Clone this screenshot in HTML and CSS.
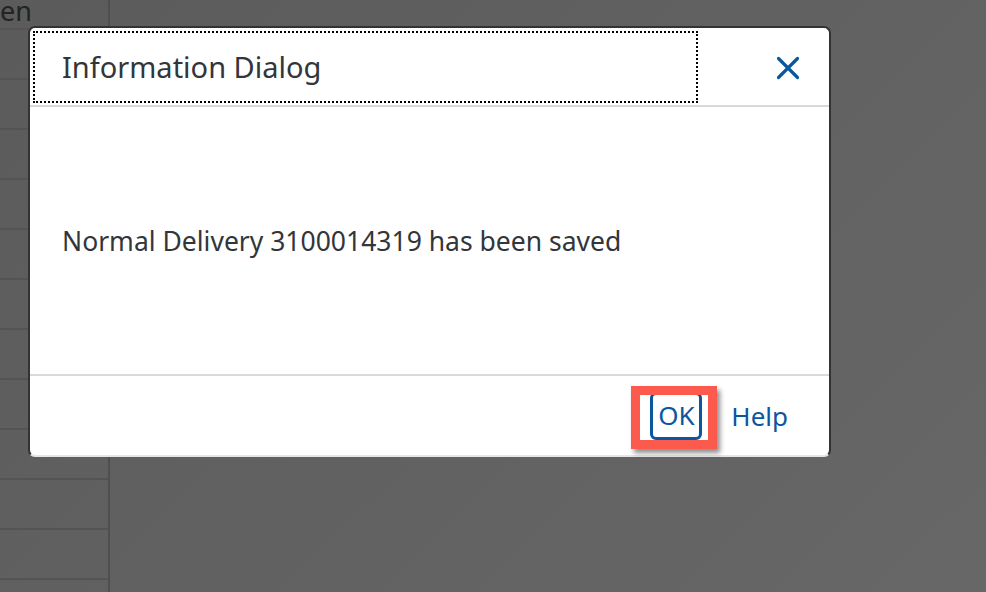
FILE: index.html
```html
<!DOCTYPE html>
<html lang="en">
<head>
  <meta charset="UTF-8">
  <title>Information Dialog</title>
  <link rel="stylesheet" href="styles.css">
</head>
<body>
  <div class="backdrop">
    <div class="side">
      <div class="row"><span class="cut">en</span></div>
      <div class="row"></div>
      <div class="row"></div>
      <div class="row"></div>
      <div class="row"></div>
      <div class="row"></div>
      <div class="row"></div>
      <div class="row"></div>
      <div class="row"></div>
      <div class="row"></div>
      <div class="row"></div>
      <div class="row"></div>
    </div>
    <div class="main"></div>
  </div>

  <div class="dialog">
    <div class="dialog-header">
      <div class="title-focus">Information Dialog</div>
      <button class="close-btn" aria-label="Close">
        <svg width="24" height="24" viewBox="0 0 24 24">
          <path d="M2.5 2.5 L21.5 21.5 M21.5 2.5 L2.5 21.5" stroke="#0a57a1" stroke-width="3.2" stroke-linecap="round" fill="none"/>
        </svg>
      </button>
    </div>
    <div class="dialog-body">
      <p>Normal Delivery 3100014319 has been saved</p>
    </div>
    <div class="dialog-footer">
      <div class="highlight">
        <button class="ok-btn">OK</button>
      </div>
      <button class="link-btn">Help</button>
    </div>
  </div>
</body>
</html>
```

FILE: styles.css
```css
html, body {
  margin: 0;
  height: 100%;
}
body {
  font-family: "Noto Sans", "Open Sans", sans-serif;
  background: linear-gradient(135deg, #5b5b5b 0%, #616161 50%, #676767 100%);
  overflow: hidden;
  color: #32363a;
}
.backdrop {
  display: grid;
  grid-template-columns: 110px 1fr;
  height: 592px;
}
.side {
  border-right: 2px solid #4f4f4f;
}
.row {
  height: 48px;
  border-bottom: 2px solid #545454;
}
.row:first-child {
  height: 28px;
}
.cut {
  display: block;
  font-size: 27px;
  line-height: 22px;
  color: #232323;
}
.dialog {
  position: absolute;
  left: 28px;
  top: 26px;
  width: 803px;
  height: 431px;
  box-sizing: border-box;
  background: #fff;
  border: 2px solid #333;
  border-bottom-color: #e6e6e6;
  border-radius: 7px;
  display: flex;
  flex-direction: column;
}
.dialog-header {
  height: 79px;
  display: flex;
  align-items: flex-start;
  border-bottom: 2px solid #d9d9d9;
  padding: 3px 0 0 3px;
  box-sizing: border-box;
}
.title-focus {
  width: 665px;
  height: 72px;
  box-sizing: border-box;
  border: 2px dotted #000;
  display: flex;
  align-items: center;
  padding-left: 27px;
  padding-bottom: 2px;
  font-size: 29px;
  color: #32363a;
}
.close-btn {
  margin: 24px 28px 0 auto;
  background: none;
  border: none;
  padding: 0;
  width: 26px;
  height: 26px;
  display: flex;
  align-items: center;
  justify-content: center;
}
.dialog-body {
  flex: 1;
  display: flex;
  align-items: center;
  padding-left: 32px;
  border-bottom: 2px solid #d9d9d9;
}
.dialog-body p {
  margin: 0;
  font-size: 26.5px;
  color: #32363a;
}
.dialog-footer {
  height: 79px;
  display: flex;
  align-items: center;
  justify-content: flex-end;
  padding-right: 41px;
  gap: 14px;
}
.highlight {
  border: 9px solid #fb5a4c;
  box-shadow: 3px 4px 5px rgba(0, 0, 0, 0.45);
  width: 68px;
  height: 45px;
  overflow: hidden;
  margin-top: 4px;
}
.ok-btn {
  display: block;
  font-family: inherit;
  font-size: 26px;
  color: #0a57a1;
  background: #fff;
  border: 3px solid #0a57a1;
  border-radius: 6px;
  width: 52px;
  height: 48px;
  margin: -3px 0 0 10px;
  padding: 0 0 2px;
  line-height: 1;
}
.link-btn {
  font-family: inherit;
  font-size: 26px;
  color: #0a57a1;
  background: none;
  border: none;
  padding: 0;
}
```
